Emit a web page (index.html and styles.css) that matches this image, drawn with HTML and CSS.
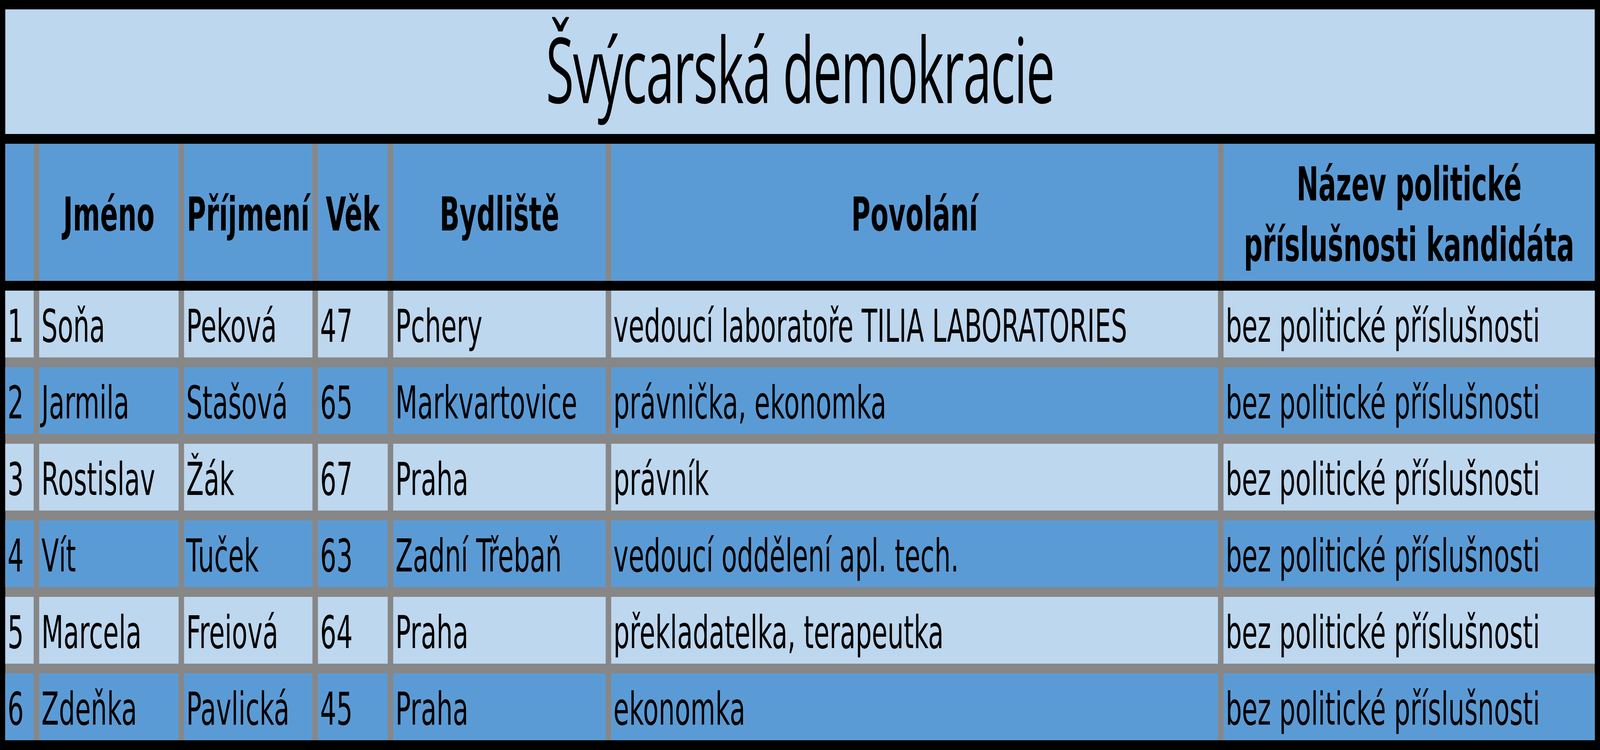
FILE: index.html
```html
<!DOCTYPE html>
<html lang="cs">
<head>
<meta charset="utf-8">
<title>Švýcarská demokracie</title>
<link rel="stylesheet" href="styles.css">
</head>
<body>
<div class="sheet">
<div class="frame">
  <div class="title">Švýcarská demokracie</div>
  <div class="row head">
    <div class="cell"></div>
    <div class="cell">Jméno</div>
    <div class="cell">Příjmení</div>
    <div class="cell">Věk</div>
    <div class="cell">Bydliště</div>
    <div class="cell">Povolání</div>
    <div class="cell">Název politické příslušnosti kandidáta</div>
  </div>
  <div class="body">
    <div class="row light">
      <div class="cell">1</div><div class="cell">Soňa</div><div class="cell">Peková</div><div class="cell">47</div><div class="cell">Pchery</div><div class="cell">vedoucí laboratoře TILIA LABORATORIES</div><div class="cell">bez politické příslušnosti</div>
    </div>
    <div class="row dark">
      <div class="cell">2</div><div class="cell">Jarmila</div><div class="cell">Stašová</div><div class="cell">65</div><div class="cell">Markvartovice</div><div class="cell">právnička, ekonomka</div><div class="cell">bez politické příslušnosti</div>
    </div>
    <div class="row light">
      <div class="cell">3</div><div class="cell">Rostislav</div><div class="cell">Žák</div><div class="cell">67</div><div class="cell">Praha</div><div class="cell">právník</div><div class="cell">bez politické příslušnosti</div>
    </div>
    <div class="row dark">
      <div class="cell">4</div><div class="cell">Vít</div><div class="cell">Tuček</div><div class="cell">63</div><div class="cell">Zadní Třebaň</div><div class="cell">vedoucí oddělení apl. tech.</div><div class="cell">bez politické příslušnosti</div>
    </div>
    <div class="row light">
      <div class="cell">5</div><div class="cell">Marcela</div><div class="cell">Freiová</div><div class="cell">64</div><div class="cell">Praha</div><div class="cell">překladatelka, terapeutka</div><div class="cell">bez politické příslušnosti</div>
    </div>
    <div class="row dark">
      <div class="cell">6</div><div class="cell">Zdeňka</div><div class="cell">Pavlická</div><div class="cell">45</div><div class="cell">Praha</div><div class="cell">ekonomka</div><div class="cell">bez politické příslušnosti</div>
    </div>
  </div>
</div>
</div>
</body>
</html>
```
FILE: styles.css
```css
html, body {
  margin: 0;
  padding: 0;
  background: #000;
}

/* Viewport-sized wrapper; the sheet inside is designed at 7267px
   wide and squeezed horizontally to the window's real width. */
.sheet {
  width: 100%;
  height: 1920px;
  overflow: clip;
  contain: paint;
}

.frame {
  box-sizing: border-box;
  width: 7267px;
  height: 1920px;
  background: #000;
  padding: 24px 24px 25px 24px;
  display: flex;
  flex-direction: column;
  gap: 25px;
  color: #000;
  transform-origin: 0 0;
  transform: scaleX(tan(atan2(100vw, 7267px)));
}

.title {
  box-sizing: border-box;
  height: 319px;
  padding-bottom: 20px;
  background: #BDD7EE;
  display: flex;
  align-items: center;
  justify-content: center;
  font-family: "Open Sans", "Noto Sans", sans-serif;
  font-size: 232px;
  letter-spacing: -4px;
  line-height: 1;
  white-space: nowrap;
}

.row {
  display: grid;
  grid-template-columns: 129px 633px 583px 317px 965px 2756px 1686px;
  column-gap: 25px;
  background: #878787;
}

.cell {
  box-sizing: border-box;
  display: flex;
  align-items: center;
  padding: 9px 10px 0 10px;
  font-family: "DejaVu Sans", Verdana, sans-serif;
  font-size: 116px;
  white-space: nowrap;
  overflow: hidden;
  min-width: 0;
}

.head {
  height: 351px;
}

.head .cell {
  background: #5B9BD5;
  justify-content: center;
  text-align: center;
  padding-top: 12px;
  font-weight: bold;
  font-size: 119px;
  line-height: 1.3;
  white-space: normal;
}

.body {
  display: flex;
  flex-direction: column;
  gap: 25px;
  background: #878787;
}

.body .row {
  height: 171px;
}

.light .cell {
  background: #BDD7EE;
}

.dark .cell {
  background: #5B9BD5;
}
```
